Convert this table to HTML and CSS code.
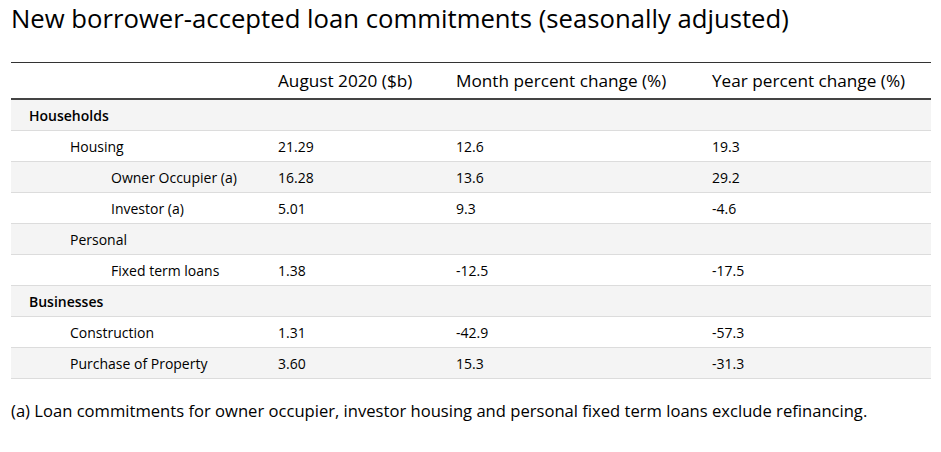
FILE: index.html
```html
<!DOCTYPE html>
<html>
<head>
<meta charset="utf-8">
<link rel="stylesheet" href="styles.css">
</head>
<body>
<h1 class="title">New borrower-accepted loan commitments (seasonally adjusted)</h1>
<table class="data">
  <colgroup>
    <col class="c1"><col class="c2"><col class="c3"><col class="c4">
  </colgroup>
  <thead>
    <tr><th></th><th>August 2020 ($b)</th><th>Month percent change (%)</th><th>Year percent change (%)</th></tr>
  </thead>
  <tbody>
    <tr class="alt"><td class="l0">Households</td><td></td><td></td><td></td></tr>
    <tr><td class="l1">Housing</td><td>21.29</td><td>12.6</td><td>19.3</td></tr>
    <tr class="alt"><td class="l2">Owner Occupier (a)</td><td>16.28</td><td>13.6</td><td>29.2</td></tr>
    <tr><td class="l2">Investor (a)</td><td>5.01</td><td>9.3</td><td>-4.6</td></tr>
    <tr class="alt"><td class="l1">Personal</td><td></td><td></td><td></td></tr>
    <tr><td class="l2">Fixed term loans</td><td>1.38</td><td>-12.5</td><td>-17.5</td></tr>
    <tr class="alt"><td class="l0">Businesses</td><td></td><td></td><td></td></tr>
    <tr><td class="l1">Construction</td><td>1.31</td><td>-42.9</td><td>-57.3</td></tr>
    <tr class="alt"><td class="l1">Purchase of Property</td><td>3.60</td><td>15.3</td><td>-31.3</td></tr>
  </tbody>
</table>
<p class="note">(a) Loan commitments for owner occupier, investor housing and personal fixed term loans exclude refinancing.</p>
</body>
</html>
```
FILE: styles.css
```css
html, body { margin: 0; padding: 0; background: #fff; }
body {
  padding: 0 10px 0 11px;
  font-family: "Open Sans", "Noto Sans", sans-serif;
  color: #000;
}
.title {
  margin: 0;
  padding-top: 2px;
  font-size: 25.7px;
  font-weight: 500;
  line-height: 34px;
}
.data {
  margin-top: 26px;
  width: 920px;
  border-collapse: collapse;
  table-layout: fixed;
  font-size: 14px;
}
.c1 { width: 259px; }
.c2 { width: 178px; }
.c3 { width: 256px; }
.c4 { width: 227px; }
.data thead tr {
  border-top: 1px solid #333;
  border-bottom: 2px solid #444;
}
.data th {
  text-align: left;
  font-size: 17.2px;
  font-weight: 500;
  height: 35px;
  padding: 0 8px;
  vertical-align: middle;
}
.data td {
  height: 30px;
  padding: 0 8px;
  border-bottom: 1px solid #dcdcdc;
  vertical-align: middle;
}
.data tr.alt td { background: #f4f4f4; }
.data td.l0 { padding-left: 18px; font-weight: 600; }
.data td.l1 { padding-left: 59px; }
.data td.l2 { padding-left: 100px; }
.note {
  margin: 20px 0 0;
  font-size: 16.6px;
}
```
